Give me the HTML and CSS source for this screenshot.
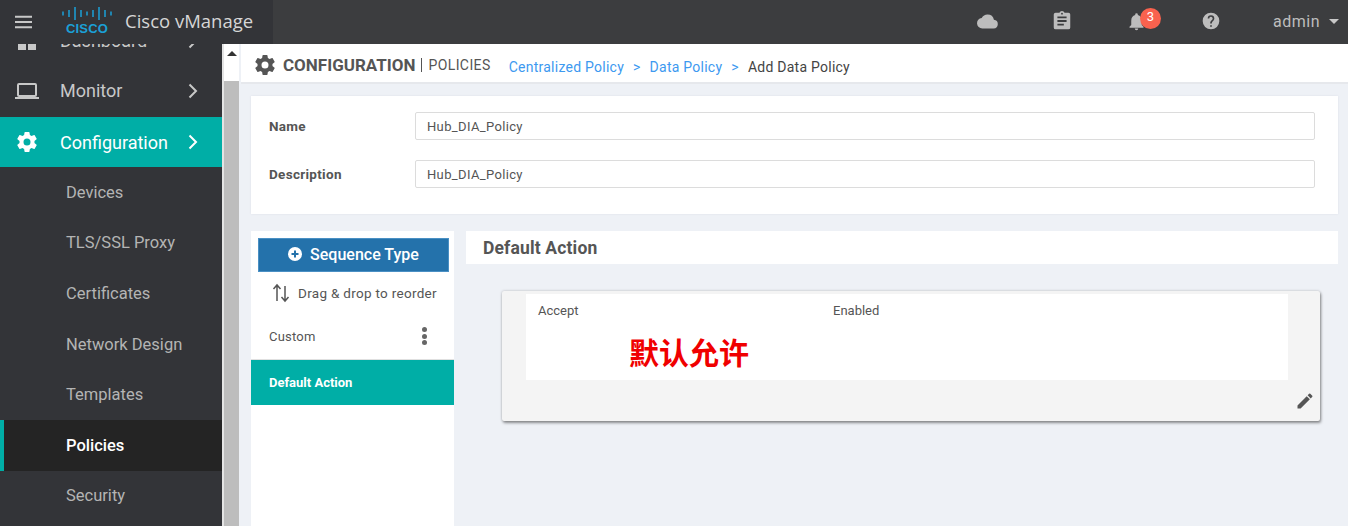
FILE: index.html
```html
<!DOCTYPE html>
<html lang="en">
<head>
  <meta charset="UTF-8">
  <title>Cisco vManage - Add Data Policy</title>
  <link rel="stylesheet" href="styles.css">
</head>
<body>
  <header class="topbar">
    <div class="brand">
      <svg class="burger" viewBox="0 0 18 14" width="17" height="14"><path d="M0 1.500h18M0 7h18M0 12.500h18" stroke="#c8c8c8" stroke-width="2"/></svg>
      <div class="logo">
        <svg viewBox="0 0 50 13" width="50" height="13"><path d="M1 4.500v4M7 3v7M13 0v13M19 3v7M25 4.500v4M31 3v7M37 0v13M43 3v7M49 4.500v4" stroke="#1ba0d7" stroke-width="1.500"/></svg>
        <span class="logo-word">CISCO</span>
      </div>
      <span class="product">Cisco vManage</span>
    </div>
    <div class="topbar-icons">
      <svg class="cloud" viewBox="0 0 24 24" width="21" height="21"><path fill="#bdbdbd" d="M19.350 10.040A7.490 7.490 0 0 0 12 4a7.500 7.500 0 0 0-6.650 4.040A6 6 0 0 0 6 20h13a5 5 0 0 0 .35-9.960z"/></svg>
      <svg class="clip" viewBox="0 0 24 24" width="22" height="22"><path fill="#bdbdbd" d="M19 3h-4.180a3 3 0 0 0-5.640 0H5a2 2 0 0 0-2 2v14a2 2 0 0 0 2 2h14a2 2 0 0 0 2-2V5a2 2 0 0 0-2-2zm-7 0a1 1 0 1 1 0 2 1 1 0 0 1 0-2zm2 14H7v-2h7v2zm3-4H7v-2h10v2zm0-4H7V7h10v2z"/></svg>
      <div class="bell">
        <svg viewBox="0 0 24 24" width="21" height="21"><path fill="#bdbdbd" d="M12 22a2 2 0 0 0 2-2h-4a2 2 0 0 0 2 2zm6-6v-5c0-3.070-1.630-5.640-4.500-6.320V4a1.500 1.500 0 0 0-3 0v.68C7.640 5.360 6 7.920 6 11v5l-2 2v1h16v-1l-2-2z"/></svg>
        <span class="badge">3</span>
      </div>
      <svg class="help" viewBox="0 0 24 24" width="20" height="20"><path fill="#bdbdbd" d="M12 2a10 10 0 1 0 0 20 10 10 0 0 0 0-20zm1 17h-2v-2h2v2zm2.070-7.750-.9.92C13.450 12.900 13 13.500 13 15h-2v-.5c0-1.100.45-2.100 1.170-2.830l1.240-1.260A2 2 0 1 0 10 9H8a4 4 0 1 1 8 0c0 .88-.36 1.680-.93 2.250z"/></svg>
      <span class="user">admin</span>
      <span class="caret"></span>
    </div>
  </header>

  <div class="layout">
    <nav class="sidebar">
      <a class="nav-item nav-dash">
        <svg class="nav-icon" viewBox="0 0 24 24" width="24" height="24"><path fill="#c8c8c8" d="M3 3h8v8H3zM13 3h8v8h-8zM3 13h8v8H3zM13 13h8v8h-8z"/></svg>
        <span>Dashboard</span>
        <svg class="chev" viewBox="0 0 10 16" width="10" height="16"><path d="M1.500 1.500 8 8l-6.500 6.500" fill="none" stroke="#c8c8c8" stroke-width="2"/></svg>
      </a>
      <a class="nav-item nav-monitor">
        <svg class="nav-icon" viewBox="0 0 24 24" width="24" height="24"><path fill="#c8c8c8" d="M20 18a2 2 0 0 0 2-2V6a2 2 0 0 0-2-2H4a2 2 0 0 0-2 2v10a2 2 0 0 0 2 2H0v2h24v-2h-4zM4 6h16v10H4V6z"/></svg>
        <span>Monitor</span>
        <svg class="chev" viewBox="0 0 10 16" width="10" height="16"><path d="M1.500 1.500 8 8l-6.500 6.500" fill="none" stroke="#c8c8c8" stroke-width="2"/></svg>
      </a>
      <a class="nav-item nav-active">
        <svg class="nav-icon" viewBox="0 0 24 24" width="24" height="24"><path fill="#fff" d="M19.430 12.980c.04-.32.07-.64.07-.98s-.03-.66-.07-.98l2.110-1.650a.5.5 0 0 0 .12-.64l-2-3.460a.5.5 0 0 0-.61-.22l-2.490 1a7.300 7.300 0 0 0-1.690-.98l-.38-2.650A.49.49 0 0 0 14 2h-4a.49.49 0 0 0-.49.42l-.38 2.650c-.61.25-1.170.59-1.690.98l-2.490-1a.49.49 0 0 0-.61.22l-2 3.460a.49.49 0 0 0 .12.64l2.110 1.650c-.04.32-.07.65-.07.98s.03.66.07.98l-2.110 1.650a.5.5 0 0 0-.12.64l2 3.460c.12.22.39.3.61.22l2.490-1c.52.4 1.080.73 1.690.98l.38 2.650c.03.24.24.42.49.42h4c.25 0 .46-.18.49-.42l.38-2.650a7.700 7.700 0 0 0 1.690-.98l2.490 1c.23.09.49 0 .61-.22l2-3.460a.5.5 0 0 0-.12-.64l-2.110-1.650zM12 15.500a3.500 3.500 0 1 1 0-7 3.500 3.500 0 0 1 0 7z"/></svg>
        <span>Configuration</span>
        <svg class="chev" viewBox="0 0 10 16" width="10" height="16"><path d="M1.500 1.500 8 8l-6.500 6.500" fill="none" stroke="#fff" stroke-width="2"/></svg>
      </a>
      <a class="sub-item">Devices</a>
      <a class="sub-item">TLS/SSL Proxy</a>
      <a class="sub-item">Certificates</a>
      <a class="sub-item">Network Design</a>
      <a class="sub-item">Templates</a>
      <a class="sub-item sub-active">Policies</a>
      <a class="sub-item">Security</a>
    </nav>

    <div class="scrollbar">
      <div class="scroll-top"><span class="scroll-arrow"></span></div>
      <div class="scroll-thumb"></div>
    </div>

    <main class="content">
      <div class="titlebar">
        <svg viewBox="0 0 24 24" width="24" height="24"><path fill="#555" d="M19.430 12.980c.04-.32.07-.64.07-.98s-.03-.66-.07-.98l2.110-1.650a.5.5 0 0 0 .12-.64l-2-3.460a.5.5 0 0 0-.61-.22l-2.490 1a7.300 7.300 0 0 0-1.690-.98l-.38-2.650A.49.49 0 0 0 14 2h-4a.49.49 0 0 0-.49.42l-.38 2.650c-.61.25-1.170.59-1.690.98l-2.490-1a.49.49 0 0 0-.61.22l-2 3.460a.49.49 0 0 0 .12.64l2.110 1.650c-.04.32-.07.65-.07.98s.03.66.07.98l-2.110 1.650a.5.5 0 0 0-.12.64l2 3.460c.12.22.39.3.61.22l2.490-1c.52.4 1.080.73 1.690.98l.38 2.650c.03.24.24.42.49.42h4c.25 0 .46-.18.49-.42l.38-2.650a7.700 7.700 0 0 0 1.690-.98l2.490 1c.23.09.49 0 .61-.22l2-3.460a.5.5 0 0 0-.12-.64l-2.110-1.650zM12 15.500a3.500 3.500 0 1 1 0-7 3.500 3.500 0 0 1 0 7z"/></svg>
        <span class="title-main">CONFIGURATION</span>
        <span class="title-sep"></span>
        <span class="title-sub">POLICIES</span>
        <div class="crumbs">
          <a>Centralized Policy</a><i>&gt;</i>
          <a>Data Policy</a><i>&gt;</i>
          <span>Add Data Policy</span>
        </div>
      </div>

      <section class="form-card">
        <div class="form-row">
          <label>Name</label>
          <div class="input">Hub_DIA_Policy</div>
        </div>
        <div class="form-row">
          <label>Description</label>
          <div class="input">Hub_DIA_Policy</div>
        </div>
      </section>

      <div class="columns">
        <aside class="seq-panel">
          <div class="seq-btn">
            <svg viewBox="0 0 14 14" width="14" height="14"><circle cx="7" cy="7" r="7" fill="#fff"/><path d="M7 3.500v7M3.500 7h7" stroke="#2472ab" stroke-width="2"/></svg>
            <span>Sequence Type</span>
          </div>
          <div class="seq-hint">
            <svg viewBox="0 0 18 20" width="18" height="20"><path d="M5 18V3M1.500 6 5 2l3.500 4M13 3v15M9.500 14l3.500 4 3.500-4" fill="none" stroke="#555" stroke-width="1.500"/></svg>
            <span>Drag &amp; drop to reorder</span>
          </div>
          <div class="seq-row">
            <span>Custom</span>
            <span class="dots"><b></b><b></b><b></b></span>
          </div>
          <div class="seq-default">Default Action</div>
        </aside>

        <div class="action-col">
          <h2 class="action-title">Default Action</h2>
          <div class="action-card">
            <div class="action-inner">
              <div class="action-line">
                <span class="action-key">Accept</span>
                <span>Enabled</span>
              </div>
              <div class="action-note">默认允许</div>
            </div>
            <svg class="pencil" viewBox="0 0 24 24" width="20" height="20"><path fill="#555" d="M3 17.250V21h3.750L17.810 9.940l-3.750-3.750L3 17.250zM20.710 7.040a1 1 0 0 0 0-1.410l-2.340-2.340a1 1 0 0 0-1.410 0l-1.830 1.830 3.750 3.750 1.830-1.830z"/></svg>
          </div>
        </div>
      </div>
    </main>
  </div>
</body>
</html>
```

FILE: styles.css
```css
* {
  box-sizing: border-box;
}
html, body {
  height: 100%;
  overflow: hidden;
}
body {
  margin: 0;
  font-family: Roboto, "Noto Sans CJK SC", sans-serif;
  color: #555;
  background: #eef1f6;
}

/* top bar */
.topbar {
  position: relative;
  z-index: 2;
  display: flex;
  justify-content: space-between;
  height: 44px;
  background: #3c3d3f;
}
.brand {
  display: flex;
  align-items: center;
  width: 273px;
  padding-left: 15px;
  background: #333438;
}
.logo {
  display: flex;
  flex-direction: column;
  align-items: center;
  width: 50px;
  margin-left: 30px;
  padding-bottom: 3px;
}
.logo-word {
  margin-top: 3px;
  color: #1ba0d7;
  font-family: "Liberation Sans", sans-serif;
  font-size: 13px;
  font-weight: 700;
  line-height: 11px;
  letter-spacing: 0.2px;
}
.product {
  margin-left: 13px;
  padding-bottom: 3px;
  color: #d6d6d6;
  font-family: "Open Sans", sans-serif;
  font-size: 18.5px;
}
.topbar-icons {
  display: flex;
  align-items: center;
  padding: 0 9px 2px 0;
}
.clip {
  margin-left: 53px;
}
.bell {
  position: relative;
  display: flex;
  margin-left: 52.5px;
}
.badge {
  position: absolute;
  top: -2.5px;
  left: 14.5px;
  width: 21px;
  height: 21px;
  border-radius: 50%;
  background: #f9624e;
  color: #fff;
  font-size: 13px;
  line-height: 18px;
  text-align: center;
}
.help {
  margin-left: 54.5px;
}
.user {
  margin-left: 52px;
  color: #bdbdbd;
  font-size: 16px;
  letter-spacing: 0.5px;
}
.caret {
  margin-left: 9px;
  border-left: 5px solid transparent;
  border-right: 5px solid transparent;
  border-top: 5px solid #c8c8c8;
}

/* sidebar */
.layout {
  display: flex;
  height: 482px;
}
.sidebar {
  flex: 0 0 222px;
  overflow: hidden;
  background: #333438;
}
.nav-item {
  display: flex;
  align-items: center;
  height: 51px;
  padding-left: 15px;
  color: #c8c8c8;
  font-size: 18px;
}
.nav-dash {
  margin-top: -29px;
}
.nav-monitor {
  padding-bottom: 2px;
}
.nav-item span {
  flex: 1;
  margin-left: 21px;
}
.nav-item .chev {
  margin-right: 24px;
}
.nav-active {
  height: 50px;
  background: #00aea6;
  color: #fff;
}
.sub-item {
  display: flex;
  align-items: center;
  height: 50.6px;
  padding-left: 66px;
  color: #b4b4b4;
  font-size: 16.5px;
}
.sub-active {
  padding-left: 62px;
  border-left: 4px solid #00aea6;
  background: #242424;
  color: #fff;
  font-weight: 500;
}

/* scrollbar */
.scrollbar {
  display: flex;
  flex-direction: column;
  flex: 0 0 19px;
  padding-right: 2px;
  border-left: 2px solid #e4e4e4;
  background: #eef1f6;
}
.scroll-top {
  display: flex;
  justify-content: center;
  height: 37px;
  padding-top: 7px;
  background: #fff;
}
.scroll-arrow {
  width: 0;
  height: 0;
  border-left: 5px solid transparent;
  border-right: 5px solid transparent;
  border-bottom: 5px solid #333;
}
.scroll-thumb {
  flex: 1;
  background: #bdbdbd;
}

/* main */
.content {
  flex: 1;
  min-width: 0;
}
.titlebar {
  display: flex;
  align-items: center;
  height: 40px;
  padding: 3px 0 0 12px;
  border-bottom: 2px solid #e6e8ec;
  background: #fff;
}
.title-main {
  margin-left: 6px;
  font-size: 17px;
  font-weight: 700;
}
.title-sep {
  width: 1px;
  height: 14px;
  margin: 0 6px;
  background: #555;
}
.title-sub {
  font-size: 14px;
  letter-spacing: 0.4px;
}
.crumbs {
  display: flex;
  align-items: center;
  gap: 9px;
  margin-left: 18px;
  padding-top: 4px;
  font-size: 14px;
  letter-spacing: 0.25px;
  color: #444;
}
.crumbs a {
  color: #3d99f0;
}
.crumbs i {
  font-style: normal;
  color: #3d99f0;
}

.form-card {
  height: 118px;
  margin: 12px 10px 0;
  padding-top: 15px;
  background: #fff;
  box-shadow: 0 0 2px #dde0e6;
}
.form-row {
  display: flex;
  align-items: center;
  height: 29px;
  margin-bottom: 19px;
  padding: 0 23px 0 18px;
}
.form-row label {
  flex: 0 0 146px;
  padding-top: 1px;
  font-size: 13.5px;
  font-weight: 700;
  letter-spacing: 0.3px;
}
.input {
  flex: 1;
  height: 28px;
  padding-left: 11px;
  border: 1px solid #dcdcdc;
  border-radius: 2px;
  font-size: 13px;
  line-height: 27px;
  letter-spacing: 0.35px;
}

.columns {
  display: flex;
  gap: 12px;
  margin: 17px 10px 0;
}
.seq-panel {
  flex: 0 0 203px;
  height: 295px;
  padding-top: 7px;
  background: #fff;
}
.seq-btn {
  display: flex;
  align-items: center;
  justify-content: center;
  gap: 8px;
  height: 34px;
  margin: 0 5px 0 7px;
  padding-bottom: 2px;
  border: 1px solid #4a90c4;
  background: #2472ab;
  color: #fff;
  font-size: 16px;
  font-weight: 500;
}
.seq-hint {
  display: flex;
  align-items: center;
  gap: 8px;
  height: 42px;
  padding-left: 21px;
  font-size: 13.5px;
  letter-spacing: 0.3px;
}
.seq-row {
  display: flex;
  align-items: center;
  justify-content: space-between;
  height: 46px;
  padding: 0 27px 1px 18px;
  border-bottom: 1px solid #e0e0e0;
  font-size: 13px;
  letter-spacing: 0.2px;
}
.dots {
  display: flex;
  flex-direction: column;
  gap: 1.5px;
}
.dots b {
  width: 5px;
  height: 5px;
  border-radius: 50%;
  background: #666;
}
.seq-default {
  height: 45px;
  padding-left: 18px;
  background: #00aea6;
  color: #fff;
  font-size: 13px;
  font-weight: 700;
  line-height: 46px;
}
.action-col {
  flex: 1;
  min-width: 0;
}
.action-title {
  height: 33px;
  margin: 0;
  padding-left: 17px;
  background: #fff;
  font-size: 17.5px;
  font-weight: 700;
  line-height: 34px;
  letter-spacing: 0.15px;
}
.action-card {
  position: relative;
  height: 130px;
  margin: 27px 18px 0 36px;
  padding: 3px 32px 0 24px;
  border-radius: 2px;
  background: #f4f4f4;
  box-shadow: 1px 2px 3px rgba(0, 0, 0, 0.4), 0 0 3px rgba(0, 0, 0, 0.2);
}
.action-inner {
  height: 86px;
  padding: 9px 12px 0;
  background: #fff;
  font-size: 13px;
}
.action-line {
  display: flex;
}
.action-key {
  flex: 0 0 295px;
}
.action-note {
  margin: 13px 0 0 91px;
  color: #f00000;
  font-family: "Noto Sans CJK SC", sans-serif;
  font-size: 30px;
  font-weight: 700;
  line-height: 40px;
}
.pencil {
  position: absolute;
  right: 5px;
  bottom: 10px;
}
```
